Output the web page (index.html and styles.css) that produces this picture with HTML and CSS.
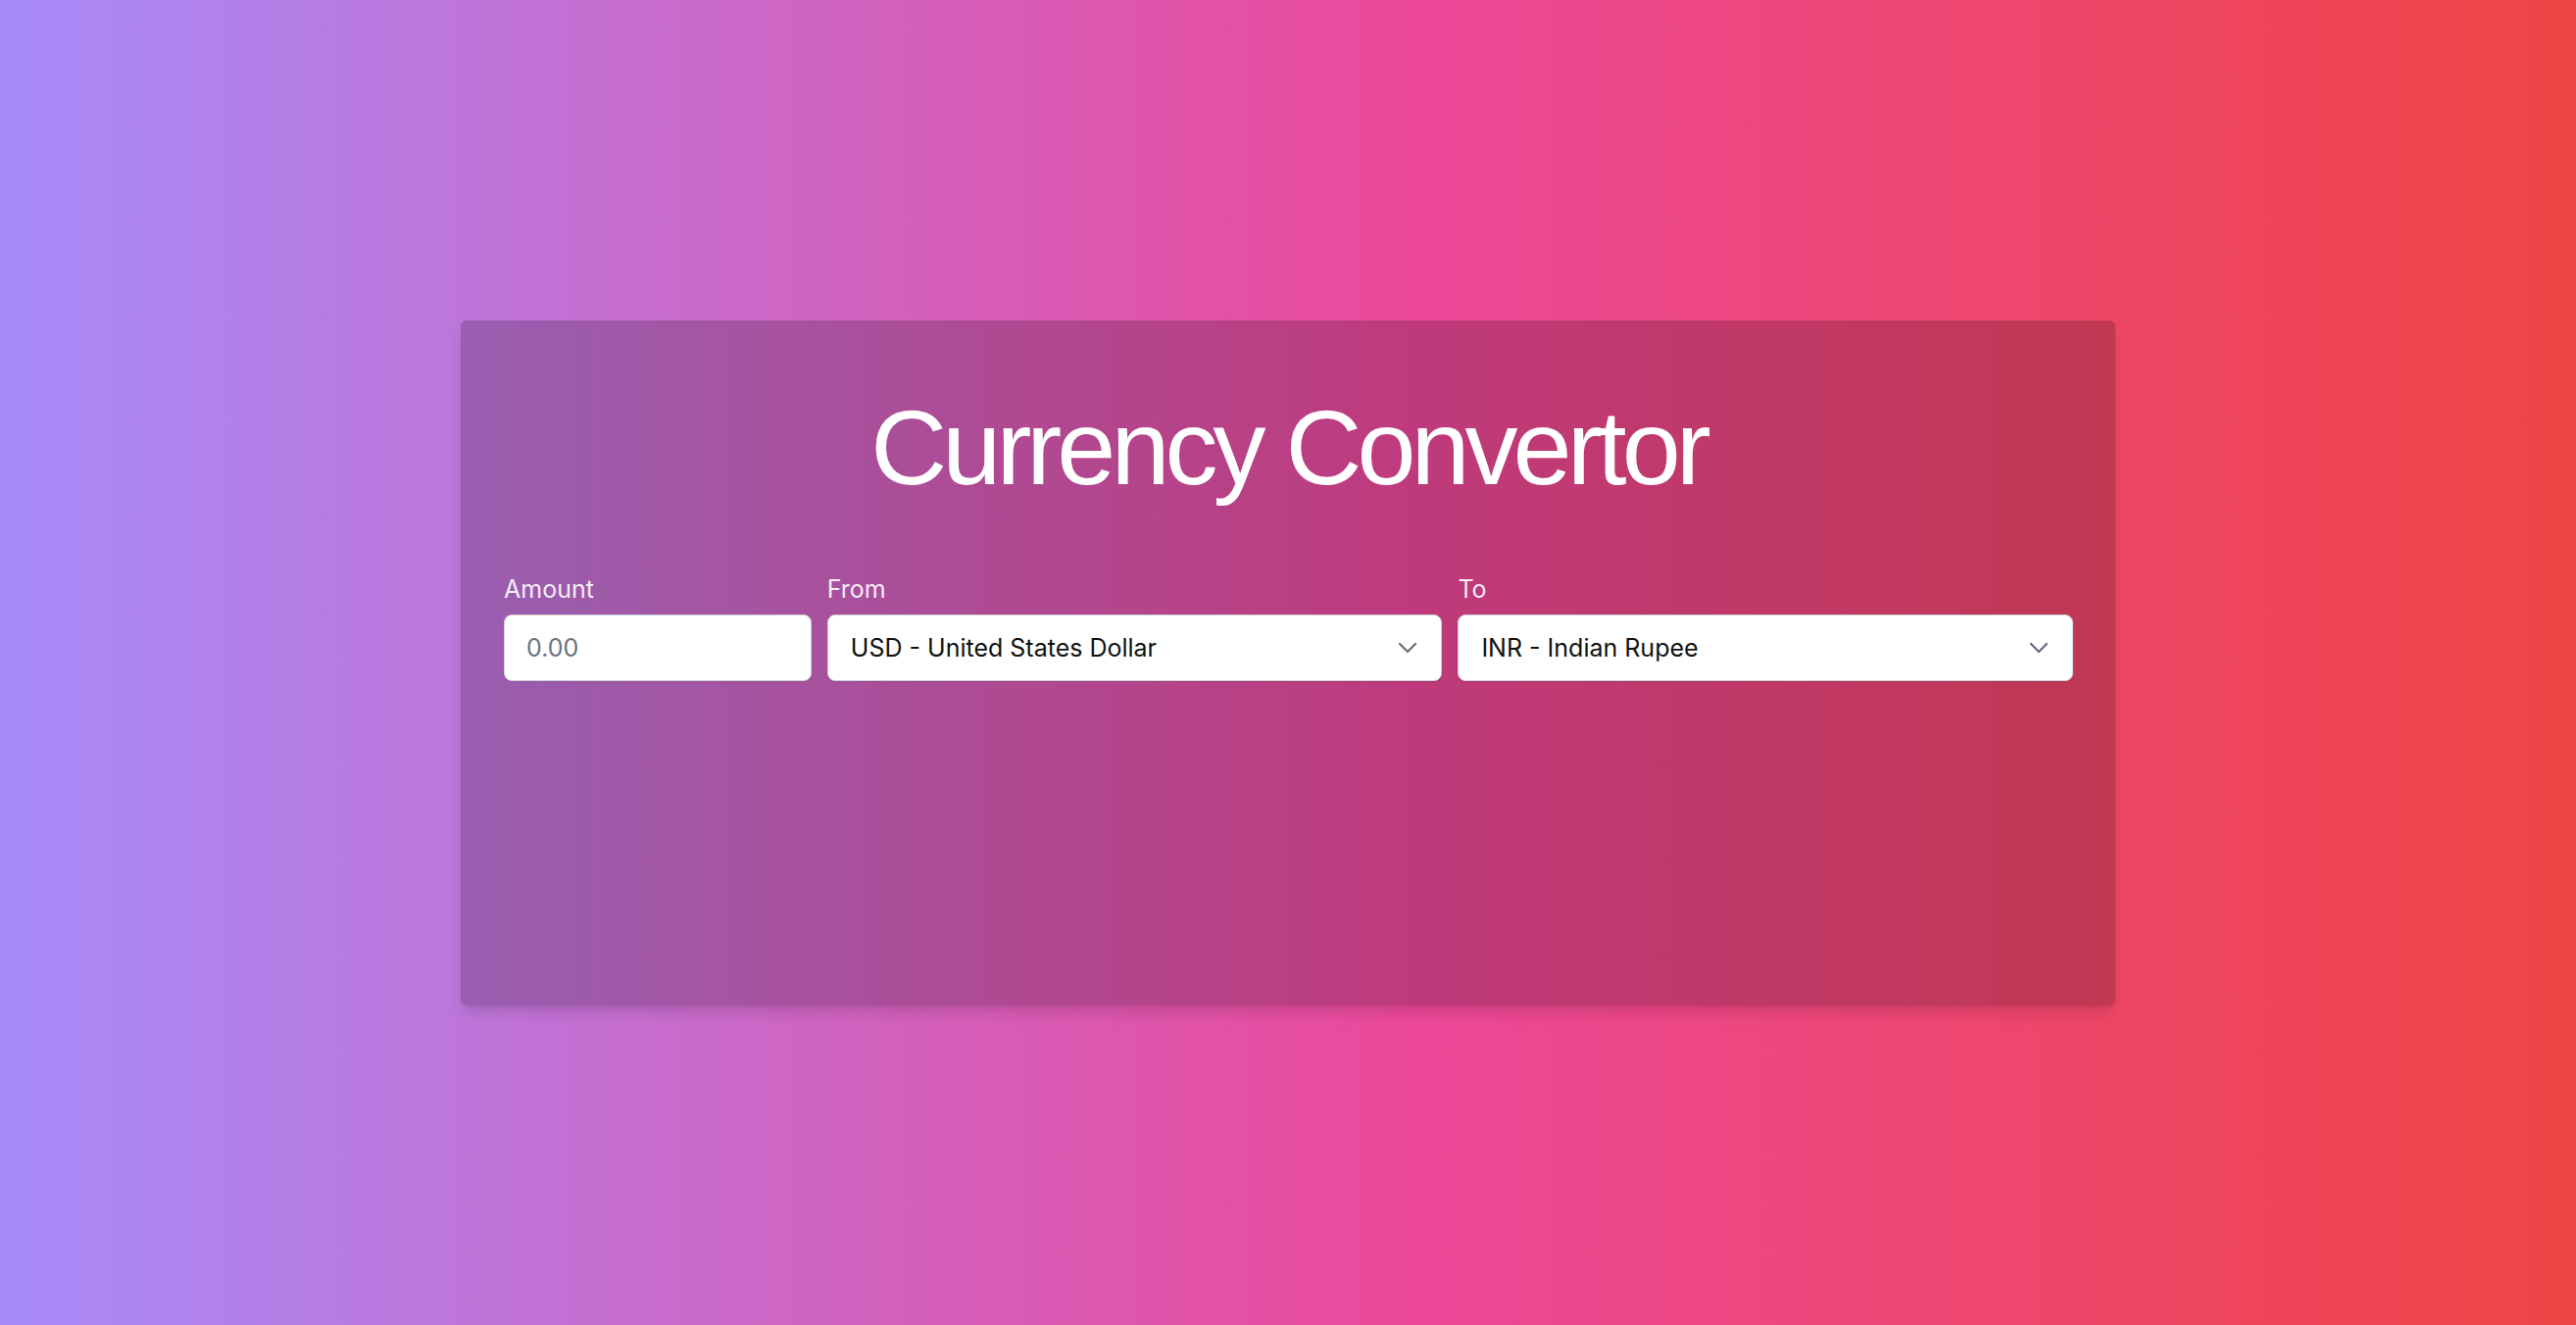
FILE: index.html
```html
<!DOCTYPE html>
<html lang="en">
<head>
<meta charset="utf-8">
<title>Currency Convertor</title>
<link rel="stylesheet" href="styles.css">
</head>
<body>
  <main class="card">
    <h1 class="title">Currency Convertor</h1>
    <div class="form-row">
      <div class="field">
        <label class="label" for="amount">Amount</label>
        <input id="amount" class="control" type="text" placeholder="0.00">
      </div>
      <div class="field">
        <label class="label" for="from">From</label>
        <div class="select-wrap">
          <select id="from" class="control select">
            <option>USD - United States Dollar</option>
          </select>
          <svg class="chevron" viewBox="0 0 20 12" width="20" height="12" aria-hidden="true"><path d="M2 2 L10 10 L18 2" fill="none" stroke="#6b7280" stroke-width="2.4" stroke-linecap="round" stroke-linejoin="round"/></svg>
        </div>
      </div>
      <div class="field">
        <label class="label" for="to">To</label>
        <div class="select-wrap">
          <select id="to" class="control select">
            <option>INR - Indian Rupee</option>
          </select>
          <svg class="chevron" viewBox="0 0 20 12" width="20" height="12" aria-hidden="true"><path d="M2 2 L10 10 L18 2" fill="none" stroke="#6b7280" stroke-width="2.4" stroke-linecap="round" stroke-linejoin="round"/></svg>
        </div>
      </div>
    </div>
  </main>
</body>
</html>
```
FILE: styles.css
```css
* { box-sizing: border-box; }

html, body { height: 100%; }

body {
  margin: 0;
  min-height: 100vh;
  display: flex;
  align-items: center;
  justify-content: center;
  background: linear-gradient(to right, #a78bfa 0%, #ec4899 55%, #ef4444 100%);
  font-family: Inter, "Noto Sans", "Liberation Sans", sans-serif;
}

.card {
  width: 1688px;
  height: 699px;
  padding: 76px 43px 40px 44px;
  background: rgba(0, 0, 0, 0.19);
  border-radius: 6px;
  box-shadow: 0 10px 15px -3px rgba(0,0,0,0.12), 0 4px 6px -4px rgba(0,0,0,0.1);
}

.title {
  margin: 0;
  font-family: "Liberation Sans", Arial, sans-serif;
  font-weight: 400;
  font-size: 108px;
  line-height: 108px;
  letter-spacing: -5px;
  color: #ffffff;
  text-align: center;
}

.form-row {
  margin-top: 74px;
  display: grid;
  grid-template-columns: 1fr 2fr 2fr;
  gap: 16px;
}

.field {
  display: flex;
  flex-direction: column;
  gap: 10px;
}

.label {
  font-size: 25px;
  line-height: 32px;
  color: rgba(255, 255, 255, 0.92);
}

.select-wrap {
  position: relative;
}

.control {
  width: 100%;
  height: 68px;
  padding: 0 22px;
  font-family: Inter, "Noto Sans", "Liberation Sans", sans-serif;
  font-size: 25px;
  color: #111111;
  background: #ffffff;
  border: 1px solid #cfcfd6;
  border-radius: 8px;
  box-shadow: 0 1px 2px rgba(0,0,0,0.1);
  outline: none;
  appearance: none;
  -webkit-appearance: none;
}

.control::placeholder { color: #6b7280; }

.select { padding-left: 23px; }

.chevron {
  position: absolute;
  right: 25px;
  top: 50%;
  margin-top: -6px;
  pointer-events: none;
}
```
